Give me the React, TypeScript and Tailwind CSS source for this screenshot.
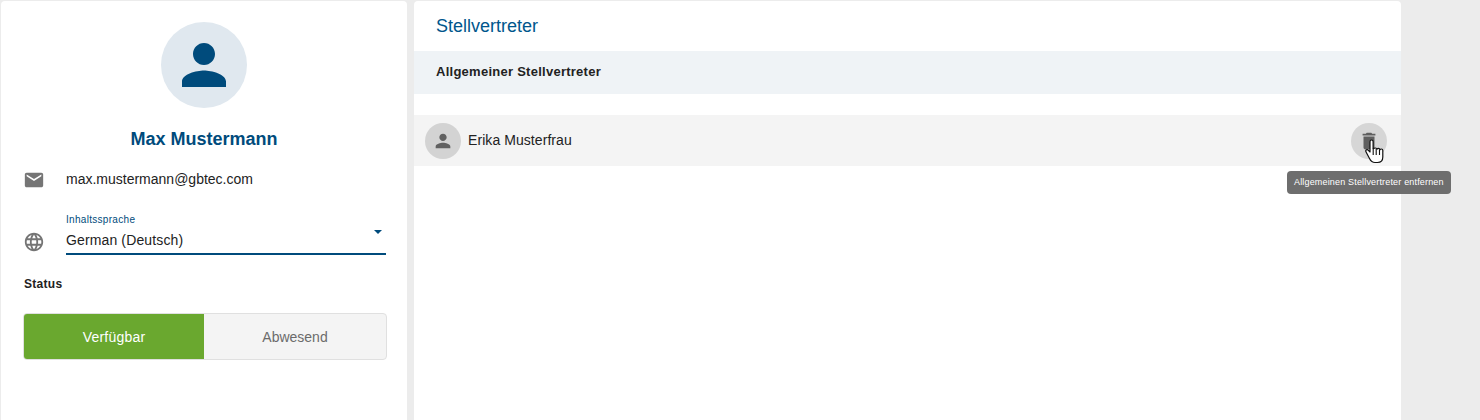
const PERSON = "M12 12c2.21 0 4-1.79 4-4s-1.79-4-4-4-4 1.79-4 4 1.79 4 4 4zm0 2c-2.67 0-8 1.34-8 4v2h16v-2c0-2.66-5.33-4-8-4z";
const MAIL = "M20 4H4c-1.1 0-1.99.9-1.99 2L2 18c0 1.1.9 2 2 2h16c1.1 0 2-.9 2-2V6c0-1.1-.9-2-2-2zm0 4l-8 5-8-5V6l8 5 8-5v2z";
const GLOBE = "M11.99 2C6.47 2 2 6.48 2 12s4.47 10 9.99 10C17.52 22 22 17.52 22 12S17.52 2 11.99 2zm6.93 6h-2.95c-.32-1.25-.78-2.45-1.38-3.56 1.84.63 3.37 1.91 4.33 3.56zM12 4.04c.83 1.2 1.48 2.53 1.91 3.96h-3.82c.43-1.43 1.08-2.76 1.91-3.96zM4.26 14C4.1 13.36 4 12.69 4 12s.1-1.36.26-2h3.38c-.08.66-.14 1.32-.14 2 0 .68.06 1.34.14 2H4.26zm.82 2h2.95c.32 1.25.78 2.45 1.38 3.56-1.84-.63-3.37-1.9-4.33-3.56zm2.95-8H5.08c.96-1.66 2.49-2.93 4.33-3.56C8.81 5.55 8.35 6.75 8.03 8zM12 19.96c-.83-1.2-1.48-2.53-1.91-3.96h3.82c-.43 1.43-1.08 2.76-1.91 3.96zM14.34 14H9.66c-.09-.66-.16-1.32-.16-2 0-.68.07-1.35.16-2h4.68c.09.65.16 1.32.16 2 0 .68-.07 1.34-.16 2zm.25 5.56c.6-1.11 1.06-2.31 1.38-3.56h2.95c-.96 1.65-2.49 2.93-4.33 3.56zM16.36 14c.08-.66.14-1.32.14-2 0-.68-.06-1.34-.14-2h3.38c.16.64.26 1.31.26 2s-.1 1.36-.26 2h-3.38z";
const TRASH = "M6 19c0 1.1.9 2 2 2h8c1.1 0 2-.9 2-2V7H6v12zM19 4h-3.5l-1-1h-5l-1 1H5v2h14V4z";

function Icon({ d, className }: { d: string; className: string }) {
  return (
    <svg viewBox="0 0 24 24" fill="currentColor" className={className}>
      <path d={d} />
    </svg>
  );
}

function HandCursor() {
  return (
    <svg viewBox="0 0 19 25" className="absolute left-[14px] top-[16px] w-[19px] h-[25px]">
      <path
        d="M6.500 1C5.500 1 5 1.800 5 2.700V13L3.400 11.300C2.600 10.500 1.500 10.500 1 11.200C.6 11.800.8 12.600 1.200 13.200L4.500 19.500C5.600 21.800 7 23.500 10 23.500H12.500C15.500 23.500 17.800 21.500 17.800 18V11.500C17.800 10.500 17.100 10 16.400 10C15.800 10 15.300 10.300 15 10.800C14.800 9.900 14.200 9.400 13.400 9.400C12.800 9.400 12.300 9.700 12 10.200C11.800 9.400 11.200 9 10.500 9C9.900 9 9.400 9.200 8.100 9.600V2.700C8.100 1.800 7.500 1 6.500 1Z"
        fill="#fff"
        stroke="#111"
        strokeWidth="1.200"
        strokeLinejoin="round"
      />
      <path d="M8.200 9.500V16M11.200 10V16M14.500 10.500V16" stroke="#111" strokeWidth="1.100" fill="none" />
    </svg>
  );
}

export default function App() {
  return (
    <div className="h-[420px] w-[1480px] overflow-hidden bg-[#ececec] flex items-stretch pt-px pl-px font-['Liberation_Sans',Arial,sans-serif] text-[14px] text-[#222]">
      <aside className="w-[406px] h-[440px] shrink-0 bg-white rounded-t-[4px] flex flex-col pt-[21px]">
        <div className="self-center w-[86px] h-[86px] rounded-full bg-[#e0e8ef] flex items-center justify-center">
          <Icon d={PERSON} className="w-[66px] h-[66px] text-[#004b7c]" />
        </div>
        <h1 className="mt-[20px] text-center text-[18px] leading-[22px] font-bold text-[#004b7c]">Max Mustermann</h1>
        <div className="mt-[19px] ml-[21.5px] flex items-center h-[20px]">
          <Icon d={MAIL} className="w-[22px] h-[22px] text-[#757575] translate-y-[1px]" />
          <span className="ml-[21.5px] leading-[20px] text-[#222]">max.mustermann@gbtec.com</span>
        </div>
        <div className="mt-[24px] ml-[21.5px] flex items-end">
          <Icon d={GLOBE} className="w-[22px] h-[22px] text-[#757575] mb-[2px]" />
          <div className="ml-[21.5px] w-[320px] h-[42px] border-b-2 border-[#004b7c] relative">
            <div className="pt-[1px] text-[10px] leading-[12px] tracking-[0.3px] text-[#004b7c]">Inhaltssprache</div>
            <div className="mt-[5px] text-[14px] leading-[18px] tracking-[0.13px] text-[#222]">German (Deutsch)</div>
            <div className="absolute right-[4px] top-[17px] w-0 h-0 border-x-[4px] border-x-transparent border-t-[4px] border-t-[#004b7c]" />
          </div>
        </div>
        <div className="mt-[21px] ml-[23px] text-[12px] leading-[16px] tracking-[0.3px] font-bold text-[#222]">Status</div>
        <div className="mt-[21px] ml-[22px] w-[364px] h-[47px] rounded-[4px] border border-[#e0e0e0] bg-[#f4f4f4] flex overflow-hidden text-[14px]">
          <div className="w-[180px] bg-[#6aa82f] text-white tracking-[0.2px] pt-[1px] flex items-center justify-center">Verfügbar</div>
          <div className="flex-1 text-[#6b6b6b] pt-[1px] flex items-center justify-center">Abwesend</div>
        </div>
      </aside>

      <main className="ml-[7px] w-[987px] h-[440px] shrink-0 bg-white rounded-t-[4px] flex flex-col relative">
        <h2 className="pl-[22px] h-[50px] flex items-center text-[18px] text-[#00568c]">Stellvertreter</h2>
        <div className="h-[43px] bg-[#eff3f6] pl-[22px] pb-[2px] flex items-center text-[13px] tracking-[0.26px] font-bold text-[#222]">Allgemeiner Stellvertreter</div>
        <div className="mt-[21px] h-[51px] bg-[#f4f4f4] flex items-center pl-[11px] pr-[14px]">
          <div className="w-[36px] h-[36px] rounded-full bg-[#d3d3d3] flex items-center justify-center">
            <Icon d={PERSON} className="w-[22px] h-[22px] text-[#616161]" />
          </div>
          <span className="ml-[7px] tracking-[0.07px] text-[#222]">Erika Musterfrau</span>
          <div className="ml-auto relative w-[36px] h-[36px] rounded-full bg-[#d6d6d6] flex items-center justify-center">
            <Icon d={TRASH} className="w-[22px] h-[22px] text-[#5f5f5f]" />
            <HandCursor />
          </div>
        </div>
        <div className="absolute left-[873px] top-[170px] h-[23px] px-[7px] rounded-[4px] bg-[#6e6e6e] text-white text-[9px] tracking-[0.17px] flex items-center whitespace-nowrap z-10">Allgemeinen Stellvertreter entfernen</div>
      </main>
    </div>
  );
}
